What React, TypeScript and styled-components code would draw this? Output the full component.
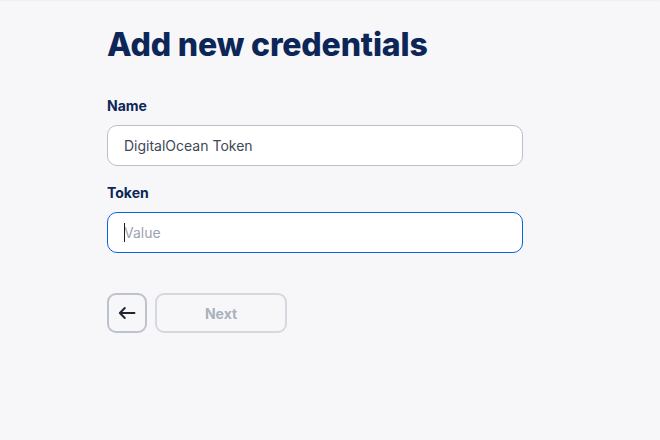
import React from "react";
import styled, { createGlobalStyle } from "styled-components";

const Global = createGlobalStyle`
  html, body { margin: 0; padding: 0; background: #f7f7f9; }
  body { font-family: Inter, "Noto Sans", sans-serif; -webkit-font-smoothing: antialiased; }
  * { box-sizing: border-box; }
`;

const Page = styled.div`
  min-height: 440px;
  background: #f7f7f9;
  box-shadow: inset 0 2px 2px -1px rgba(0, 0, 0, 0.04);
  padding: 25px 0 0 107px;
`;

const Form = styled.div`
  width: 416px;
  display: flex;
  flex-direction: column;
`;

const Title = styled.h1`
  margin: 0 0 31px;
  font-size: 32px;
  line-height: 40px;
  font-weight: 800;
  color: #0c2657;
  letter-spacing: -0.15px;
`;

const Label = styled.label<{ $top?: number }>`
  display: block;
  margin: ${(p) => p.$top ?? 0}px 0 9px;
  font-size: 14px;
  line-height: 20px;
  font-weight: 700;
  color: #0c2657;
`;

const Field = styled.div<{ $caret?: boolean }>`
  position: relative;
  width: 416px;
  &::after {
    content: "";
    display: ${(p) => (p.$caret ? "block" : "none")};
    position: absolute;
    left: 17px;
    top: 11px;
    width: 1px;
    height: 19px;
    background: #1a1a1a;
  }
`;

const Input = styled.input<{ $focused?: boolean }>`
  display: block;
  width: 416px;
  height: 41px;
  padding: 0 16px;
  border-radius: 10px;
  border: 1px solid ${(p) => (p.$focused ? "#0b62e0" : "#b9c0cb")};
  background: #ffffff;
  font-family: Inter, "Noto Sans", sans-serif;
  font-size: 14px;
  color: #3e4858;
  outline: none;
  caret-color: transparent;
  &::placeholder { color: #9ca4b1; }
`;

const Actions = styled.div`
  display: flex;
  gap: 8px;
  margin-top: 40px;
`;

const BackButton = styled.button`
  width: 40px;
  height: 40px;
  border-radius: 9px;
  border: 2px solid #bdc3cd;
  background: #f7f7f9;
  display: flex;
  align-items: center;
  justify-content: center;
  padding: 0;
  color: #1f2430;
`;

const NextButton = styled.button`
  width: 132px;
  height: 40px;
  border-radius: 9px;
  border: 2px solid #d5d9df;
  background: #f7f7f9;
  font-family: Inter, "Noto Sans", sans-serif;
  font-size: 14px;
  font-weight: 700;
  color: #aab1bd;
`;

export default function App() {
  return (
    <>
      <Global />
      <Page>
        <Form>
          <Title>Add new credentials</Title>
          <Label>Name</Label>
          <Field>
            <Input defaultValue="DigitalOcean Token" />
          </Field>
          <Label $top={17}>Token</Label>
          <Field $caret>
            <Input $focused placeholder="Value" />
          </Field>
          <Actions>
            <BackButton aria-label="Back">
              <svg width="18" height="18" viewBox="0 0 18 18" fill="none">
                <path d="M16.5 9H1.8M6.8 4L1.8 9l5 5" stroke="currentColor" strokeWidth="1.9" strokeLinecap="round" strokeLinejoin="round" />
              </svg>
            </BackButton>
            <NextButton disabled>Next</NextButton>
          </Actions>
        </Form>
      </Page>
    </>
  );
}
